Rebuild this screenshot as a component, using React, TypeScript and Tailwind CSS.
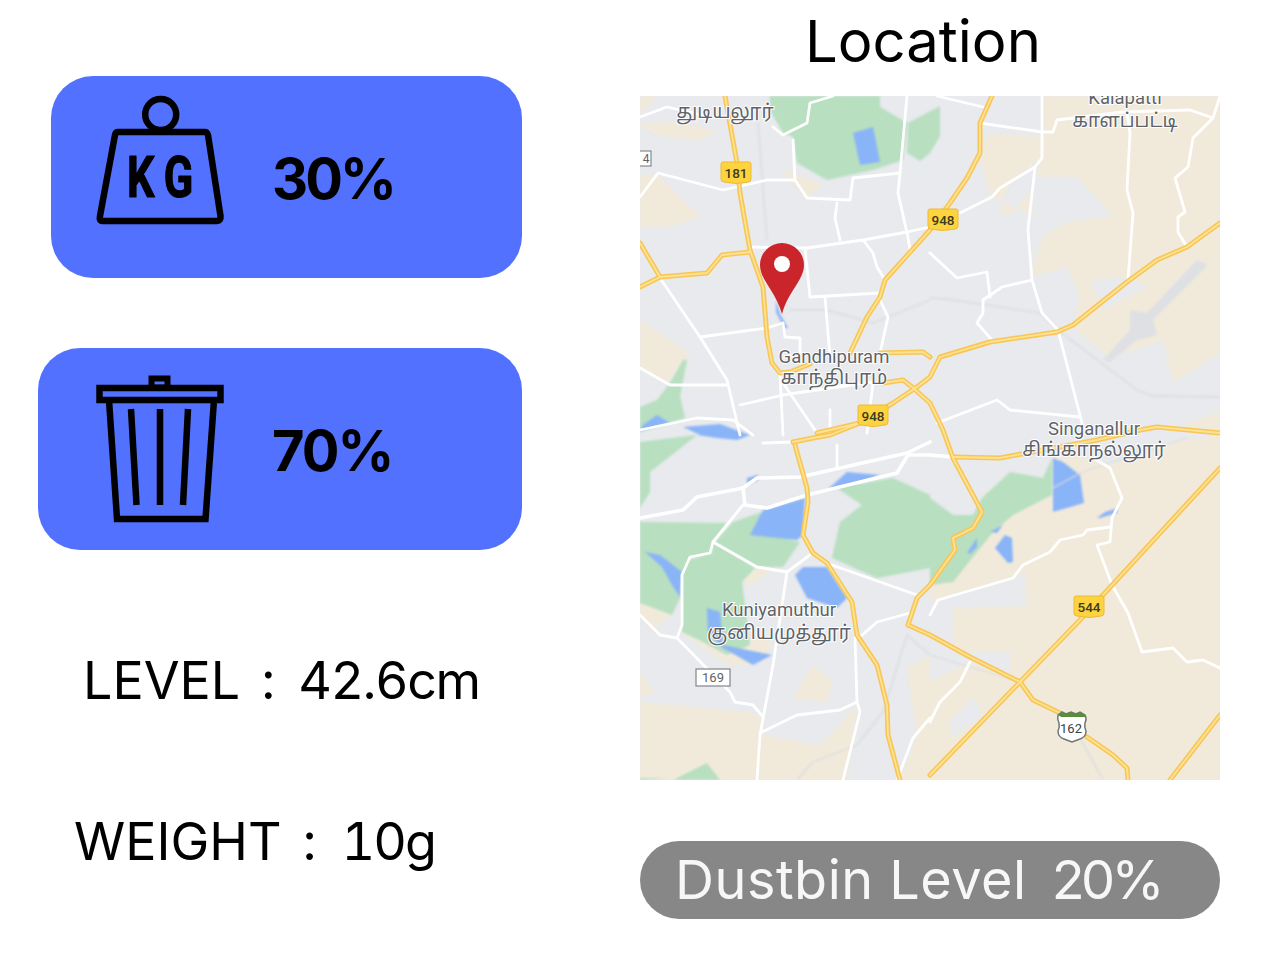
const BEIGE = [
  "362,0 580,0 580,257 533,287 523,244 470,262 433,232 440,200 427,171 393,180 393,90 403,60 402,35 402,0",
  "347,38 402,40 402,62 370,85 358,118 373,118 390,94 393,120 350,100 340,62",
  "580,340 540,345 470,368 440,360 412,362 403,382 370,376 342,400 336,420 310,470 290,490 290,684 580,684",
  "0,606 107,616 123,621 120,639 180,649 217,609 207,684 0,684",
  "267,572 290,559 290,684 260,684 277,639",
  "153,602 173,569 193,586 187,606",
  "0,576 15,596 0,602",
  "40,536 87,569 113,569 133,550 115,530 110,549 87,559 63,546",
  "102,486 117,471 135,472 110,490",
  "0,507 32,519 12,535 0,520",
  "0,0 18,0 0,18",
  "0,28 33,25 77,35 60,44 20,40 0,30",
  "0,80 17,78 60,121 30,131 0,131",
  "0,224 50,257 27,287 0,272",
  "140,72 183,88 167,102 150,84",
  "540,330 580,315 580,340",
];
const GRAY_HOLES = [
  "393,81 437,81 473,120 423,127 403,141 393,170",
  "450,184 487,181 507,191 463,214",
  "290,505 373,482 385,477 387,510 313,512 313,556 370,556 370,580 330,566 300,580 290,585",
  "310,625 335,600 342,620 312,642",
];
const GREEN = [
  "130,0 240,0 240,11 267,27 263,64 233,74 187,84 157,67 153,41 143,37 130,14",
  "268,27 300,10 300,40 290,57 280,65 267,57",
  "43,264 47,264 40,300 45,322 0,336 0,311 17,304 30,287",
  "0,346 57,339 10,376 10,396 0,412",
  "0,426 87,427 73,446 70,457 50,461 42,479 40,502 32,519 0,507",
  "122,416 115,436 160,446 143,471 117,471 75,446 93,426",
  "43,466 72,457 73,446 115,472 102,486 110,549 87,559 63,546 42,536",
  "197,392 253,382 290,399 290,472 237,482 192,462 200,426 222,409",
  "290,402 313,419 333,419 342,402 370,376 403,382 412,362 412,399 373,419 353,436 313,486 290,489",
  "33,684 67,667 80,684",
  "0,682 30,682 0,684",
];
const WATER = [
  "213,37 233,31 240,66 220,69",
  "123,414 165,402 163,439 157,444 110,439",
  "155,479 163,471 187,471 207,502 197,512 167,502",
  "5,456 20,459 42,476 40,501 32,489 22,471",
  "67,512 80,516 83,549 132,559 113,569 83,552 68,536",
  "107,382 118,379 118,384 107,389",
  "187,394 207,376 240,379 213,389",
  "57,339 110,339 97,344 77,342",
  "43,331 80,328 110,339 60,339",
  "3,329 17,319 30,327 0,335",
  "413,362 423,366 440,379 444,407 420,414 413,416",
  "457,422 465,416 478,412 477,417 460,422",
  "355,452 365,439 372,442 373,466 368,467",
  "327,457 337,442 337,451 330,458",
  "350,436 363,429 357,437",
  "136,204 140,218 148,232 144,232 136,216",
];
const RAIL = [
  "290,202 307,203 400,217 418,234 497,294 513,300 580,301",
  "118,27 127,144",
  "150,214 187,214 233,227 290,204",
  "157,684 173,666 217,649 243,616 263,552 267,539 290,559 380,586",
  "440,642 463,684",
  "413,392 440,377 457,371 547,342",
];
const WHITE = [
  "0,21 27,11 67,20",
  "0,101 18,77 83,94 127,84 155,84 167,102 210,104 213,82 260,77 267,0",
  "260,77 258,97 267,137",
  "133,31 143,39 167,27 170,7 193,0",
  "153,44 155,84",
  "197,107 195,122 200,144",
  "110,151 167,152 223,144 267,136 290,131",
  "165,152 170,201 240,197",
  "223,144 233,157 237,171 245,184",
  "267,136 270,154",
  "20,182 60,241 87,284 100,339",
  "60,241 127,232 143,227 145,241 160,242 160,257",
  "185,201 190,261",
  "240,204 248,221 240,257",
  "0,272 30,289 87,289",
  "140,277 143,339",
  "100,309 143,299 177,294 233,286",
  "143,287 177,337",
  "190,314 190,339",
  "233,287 227,337",
  "0,334 57,322 93,324 113,339",
  "297,0 343,11",
  "340,27 402,36 413,36 417,24 483,16 550,14 573,22 580,0",
  "402,0 402,62 395,71 360,92 352,101 320,117",
  "395,71 388,134 392,184 402,217 418,234 442,327",
  "392,184 362,191 343,204 343,217 337,227 352,244",
  "290,157 317,182 347,176 350,201",
  "487,17 490,37 487,94 493,117 488,184",
  "573,22 553,42 548,71 535,82 545,116 538,121 538,136 547,151",
  "297,327 357,304 370,314 440,321",
  "123,347 153,346",
  "103,409 73,446 70,457 50,461 42,479 42,529 37,542",
  "73,446 117,471 147,476 170,459",
  "147,476 133,569 120,639 117,684",
  "192,469 277,499",
  "220,541 237,526 270,517",
  "0,519 20,539 37,542 90,596 95,606 113,609 123,621",
  "120,637 157,619 200,614 217,606",
  "215,542 217,606 220,616 203,684",
  "197,349 197,372",
  "290,622 273,642 257,684",
  "290,519 298,504 373,482 383,469 410,456 420,444 443,439 447,434 470,431",
  "453,362 470,372 482,402 472,422 470,446 457,449 472,489 488,517 502,556 533,552 547,566 563,564 580,572",
  "330,566 320,586 300,606 290,626",
];
const WHITE_THICK = [
  "0,422 43,414 57,401 103,392 117,382 160,381 267,357 290,346",
  "103,392 105,409 127,412 167,399 257,377 268,359 290,359 313,361",
];
const YELLOW = [
  "85,0 97,67 100,97 110,154 123,191 127,241 132,267 140,277 150,276 170,268",
  "0,191 20,181 67,177 82,159 110,156",
  "0,147 20,181",
  "210,257 227,221 240,201 245,184 290,134 310,107 327,82 340,57 340,27 352,0",
  "240,257 283,256 290,261",
  "243,287 263,284 272,291 290,307 303,334 313,362 342,416 333,432 313,442 315,454 290,489 277,502 268,529 290,539 330,561 380,586 393,604 420,617",
  "177,337 220,327 253,307 277,291 290,281 300,261 350,246 417,236 433,229 487,186 517,164 547,151 580,127",
  "153,346 173,342 190,339 220,327",
  "155,349 167,392 168,406 163,439 173,457 187,467 212,506 217,539 237,569 247,609 248,639 260,684",
  "447,641 473,659 487,672 488,684",
  "290,679 380,586 440,524 463,499 580,372",
  "530,684 580,619",
  "313,361 360,362 387,357 457,344 500,334 517,331 580,337",
];
const LABELS: [number, number, string, number][] = [
  [85, 22, "துடியலூர்", 19],
  [485, 8, "Kalapatti", 18.5],
  [485, 31, "காளப்பட்டி", 19],
  [194, 267, "Gandhipuram", 18.5],
  [194, 288, "காந்திபுரம்", 19],
  [454, 339, "Singanallur", 18.5],
  [454, 360, "சிங்காநல்லூர்", 19],
  [139, 520, "Kuniyamuthur", 18.5],
  [139, 543, "குனியமுத்தூர்", 19],
];
const SHIELDS: [number, number, string][] = [
  [96, 77, "181"],
  [303, 124, "948"],
  [233, 320, "948"],
  [449, 511, "544"],
];

function Shield({ x, y, label }: { x: number; y: number; label: string }) {
  return (
    <g>
      <path d={`M${x - 13} ${y - 11} h26 q2 0 2 2 v15 q0 3 -3 3 q-12 3 -24 0 q-3 0 -3 -3 v-15 q0 -2 2 -2 z`} fill="#fdd33f" stroke="#efb93a" strokeWidth="1" />
      <text x={x} y={y + 5} textAnchor="middle" fontSize="13.500" fontFamily="Roboto, sans-serif" fontWeight="500" fill="#3c3a1e">{label}</text>
    </g>
  );
}

function MapDrawing() {
  return (
    <svg viewBox="0 0 580 684" width="580" height="684" className="block">
      <rect width="580" height="684" fill="#e8eaed" />
      <g className="blur-[1px]">
        {BEIGE.map((p) => <polygon key={p} points={p} fill="#f1eadb" />)}
        {GRAY_HOLES.map((p) => <polygon key={p} points={p} fill="#e8eaed" />)}
        {GREEN.map((p) => <polygon key={p} points={p} fill="#b7dfc0" />)}
        {WATER.map((p) => <polygon key={p} points={p} fill="#8ab4f8" />)}
        <polygon points="463,264 490,234 490,214 507,217 557,164 568,169 513,224 517,239 497,244 470,266" fill="#dee0e3" />
        {RAIL.map((p) => <polyline key={p} points={p} fill="none" stroke="#d9dbde" strokeWidth="1.300" />)}
      </g>
      <g className="blur-[0.4px]">
        {WHITE.map((p) => <polyline key={p} points={p} fill="none" stroke="#ffffff" strokeWidth="2.800" strokeLinejoin="round" strokeLinecap="round" />)}
        {WHITE_THICK.map((p) => <polyline key={p} points={p} fill="none" stroke="#ffffff" strokeWidth="3.600" strokeLinejoin="round" strokeLinecap="round" />)}
        {YELLOW.map((p) => <polyline key={p} points={p} fill="none" stroke="#f8c655" strokeWidth="5" strokeLinejoin="round" strokeLinecap="round" />)}
        {YELLOW.map((p) => <polyline key={p + "i"} points={p} fill="none" stroke="#fde293" strokeWidth="1.800" strokeLinejoin="round" strokeLinecap="round" />)}
      </g>
      {LABELS.map(([x, y, t, s]) => (
        <text key={t} x={x} y={y} textAnchor="middle" fontSize={s} fontFamily="Roboto, 'Noto Sans', 'Noto Sans Tamil', sans-serif" fill="#5f6368" stroke="#ffffff" strokeWidth="2" paintOrder="stroke">{t}</text>
      ))}
      {SHIELDS.map(([x, y, t], i) => <Shield key={i} x={x} y={y} label={t} />)}
      <rect x="-8" y="55" width="19" height="15" fill="#fff" stroke="#70757a" />
      <text x="6" y="67" textAnchor="middle" fontSize="12" fontFamily="Roboto, sans-serif" fill="#5f6368">4</text>
      <rect x="56" y="573" width="34" height="17" fill="#fff" stroke="#80868b" strokeWidth="1.200" />
      <text x="73" y="586" textAnchor="middle" fontSize="13" fontFamily="Roboto, sans-serif" fill="#5f6368">169</text>
      <path d="M418 619 l4 -3 l4 2 l5 -2 l5 2 l4 -2 l5 3 q2 4 0 8 q-1 4 1 8 q0 6 -6 8 l-8 3 l-8 -3 q-6 -2 -6 -8 q2 -4 1 -8 q-2 -4 -1 -8 z" fill="#fff" stroke="#70757a" strokeWidth="1.500" />
      <path d="M418 619 l4 -3 l4 2 l5 -2 l5 2 l4 -2 l5 3 q0.500 1 0.700 2 h-24.500 z" fill="#5b8c3a" />
      <text x="431" y="637" textAnchor="middle" fontSize="13" fontFamily="Roboto, sans-serif" fill="#3c4043">162</text>
      <path d="M142 147 a22 22 0 0 1 22 22 c0 15 -15 25 -22 49 c-7 -24 -22 -34 -22 -49 a22 22 0 0 1 22 -22 z" fill="#c9252b" />
      <circle cx="142" cy="168" r="8" fill="#ffffff" />
    </svg>
  );
}

function WeightIcon() {
  return (
    <svg viewBox="96 95 130 132" width="130" height="132" className="block shrink-0">
      <circle cx="160.700" cy="114.500" r="15.500" fill="none" stroke="#000" strokeWidth="6.500" />
      <path d="M118 132 H205 Q207 132 208 135 L220.500 216 Q221 221 217 221 H102.500 Q99 221 100 216 L115 135 Q115.500 132 118 132 Z" fill="none" stroke="#000" strokeWidth="6.500" strokeLinejoin="round" />
      <text transform="translate(127 197) scale(0.76 1)" fontFamily="Roboto, sans-serif" fontWeight="700" fontSize="57" letterSpacing="13" fill="#000" stroke="#000" strokeWidth="1.200" strokeLinejoin="round">KG</text>
    </svg>
  );
}

function TrashIcon() {
  return (
    <svg viewBox="96 375 130 148" width="130" height="148" className="block shrink-0">
      <rect x="99.500" y="388" width="121" height="12" fill="none" stroke="#000" strokeWidth="6.500" />
      <rect x="151.500" y="378.500" width="16" height="9" fill="none" stroke="#000" strokeWidth="6" />
      <path d="M109 400 L117 519 H205.500 L214 400" fill="none" stroke="#000" strokeWidth="6.500" />
      <path d="M131 409 L136.500 505 M160 409 V505 M188 409 L183 505" fill="none" stroke="#000" strokeWidth="6.500" />
    </svg>
  );
}

export default function App() {
  return (
    <div className="flex w-[1280px] h-[960px] bg-white text-black font-['Inter',sans-serif] overflow-hidden">
      <div className="w-[640px] shrink-0 flex flex-col">
        <div className="ml-[51px] mt-[76px] w-[471px] h-[202px] rounded-[42px] bg-[#5271ff] flex items-start pl-[45px] pt-[19px]">
          <WeightIcon />
          <div className="ml-[46px] mt-[50px] text-[56px] leading-[68px] font-bold tracking-[-3px]">30%</div>
        </div>
        <div className="ml-[38px] mt-[70px] w-[484px] h-[202px] rounded-[42px] bg-[#5271ff] flex items-start pl-[58px] pt-[27px]">
          <TrashIcon />
          <div className="ml-[46px] mt-[42px] text-[56px] leading-[68px] font-bold tracking-[-2px]">70%</div>
        </div>
        <div className="ml-[83px] mt-[98px] flex text-[52px] leading-[66px] tabular-nums">
          <span>LEVEL</span>
          <span className="ml-[21px]">:</span>
          <span className="ml-[23px] tracking-[-1.5px]">42.6cm</span>
        </div>
        <div className="ml-[74px] mt-[95px] flex text-[52px] leading-[66px] tabular-nums">
          <span>WEIGHT</span>
          <span className="ml-[21px]">:</span>
          <span className="ml-[25px] tracking-[-2px]">10g</span>
        </div>
      </div>
      <div className="w-[580px] shrink-0 flex flex-col">
        <div className="h-[96px] pl-[165px] pt-[7px] text-[58px] leading-[68px]">Location</div>
        <MapDrawing />
        <div className="mt-[61px] h-[78px] rounded-full bg-[#878787] flex items-center pl-[35px] text-[54px] leading-[66px] text-[#f7f7f7]">
          <span className="tracking-[0.5px]">Dustbin Level</span>
          <span className="ml-[25px] tracking-[-3.5px]">20%</span>
        </div>
      </div>
    </div>
  );
}
